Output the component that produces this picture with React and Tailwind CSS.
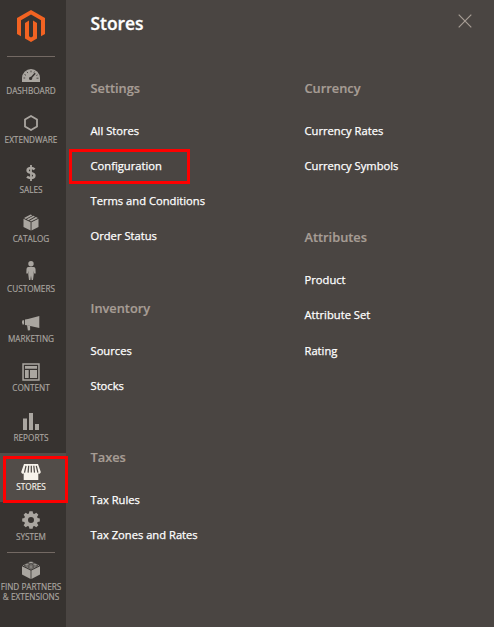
import React from "react";

const MagentoLogo = () => (
  <svg width="28" height="32" viewBox="0 0 28 32" fill="#f26322">
    <path d="M14 0L28 8V24L24 26.3V10.3L14 4.6L4 10.3V26.3L0 24V8Z" />
    <path d="M12 10.6V26.3L14 27.5L16 26.3V10.6L20 12.9V28.6L14 32L8 28.6V12.9Z" />
  </svg>
);

const Dashboard = () => (
  <svg width="18" height="13" viewBox="0 0 18 13" fill="currentColor">
    <path d="M0 13V9A9 9 0 0 1 18 9V13Z" />
    <g stroke="#373330" strokeWidth="0.8" fill="none">
      <path d="M1.5 9H3.2M2.5 5.5L4 6.3M5 2.8L5.9 4.1M9 1.6V3.3M12.5 2.6L11.9 3.6M14.5 9.2H16.5M14.3 6.5L15.6 5.9" />
      <path d="M8.3 9.7L13.2 4.2" strokeWidth="1.5" />
    </g>
    <circle cx="8.6" cy="9.4" r="1.6" fill="#373330" />
  </svg>
);

const Hexagon = () => (
  <svg width="14" height="16" viewBox="0 0 14 16" fill="none" stroke="currentColor" strokeWidth="1.8">
    <path d="M7 1L13 4.5V11.5L7 15L1 11.5V4.5Z" />
  </svg>
);

const Dollar = () => (
  <svg width="10" height="16" viewBox="0 0 10 16" fill="none" stroke="currentColor" strokeWidth="2.5">
    <path d="M8.6 4.4C7.5 3.4 6.4 3.1 5.1 3.1C3.2 3.1 1.6 3.8 1.6 5.4C1.6 8.7 8.4 7.1 8.4 10.5C8.4 12.2 6.9 13 4.8 13C3.2 13 1.9 12.5 1 11.8" />
    <path d="M5 0V16" strokeWidth="1.8" />
  </svg>
);

const Box = () => (
  <svg width="16" height="17" viewBox="0 0 16 17" fill="currentColor">
    <path d="M0.5 4.8L7.6 8.3V16.6L0.5 13ZM15.5 4.8L8.5 8.3V16.6L15.5 13Z" />
    <path d="M7.6 0.4L9.4 1.2L2.8 4.9L1 4ZM10.3 1.7L12 2.5L5.4 6.2L3.7 5.3ZM12.9 3L15 4L8.1 7.5L6.4 6.7Z" />
  </svg>
);

const Person = () => (
  <svg width="10" height="19" viewBox="0 0 10 19" fill="currentColor">
    <circle cx="5" cy="2.8" r="2.7" />
    <path d="M2.4 6H7.6Q9.4 6 9.5 8L9.7 12.5H8.1L7.7 9.5V13.5L7 19H5.6L5 14.5L4.4 19H3L2.3 13.5V9.5L1.9 12.5H0.3L0.5 8Q0.6 6 2.4 6Z" />
  </svg>
);

const Megaphone = () => (
  <svg width="18" height="15" viewBox="0 0 18 15" fill="currentColor">
    <path d="M17.3 0V12L6 9.4V3.1Z" />
    <path d="M3 3.4L6 3V9.4L3 9.1ZM0.4 4.2H2.1V8.4H0.4V7.2H0V5.2H0.4Z" />
    <path d="M5 9L8.1 10V14.2L5.9 14.6Z" />
  </svg>
);

const Layout = () => (
  <svg width="18" height="18" viewBox="0 0 18 18" fill="currentColor">
    <path fillRule="evenodd" d="M0.3 0.3H17.7V17.7H0.3ZM1.8 1.8V16.2H16.2V1.8Z" />
    <path d="M3 3H15V5.8H3ZM3 7H6.7V15H3ZM8 7H15V15H8Z" />
  </svg>
);

const Bars = () => (
  <svg width="16" height="17" viewBox="0 0 16 17" fill="currentColor">
    <path d="M0 5.5H4V17H0ZM6 0H10V17H6ZM12 11H16V17H12Z" />
  </svg>
);

const Store = () => (
  <svg width="20" height="16" viewBox="0 0 20 16" fill="currentColor">
    <path d="M3 0H17L19.8 8A1.8 1.8 0 0 1 17.3 9.6V16H2.7V9.6A1.8 1.8 0 0 1 0.2 8Z" />
    <path
      d="M5 1.8L3.5 8.6M7.7 1.8L7.1 8.6M10.3 1.8V8.6M12.8 1.8L13.5 8.6M15.3 1.8L16.9 8.6"
      stroke="#524d49"
      strokeWidth="1.25"
    />
  </svg>
);

const Gear = () => (
  <svg width="18" height="18" viewBox="0 0 18 18" fill="currentColor">
    <path
      fillRule="evenodd"
      d="M7.4 0.2H10.6L11.1 2.5L12.3 3L14.3 1.7L16.4 3.8L15.1 5.8L15.6 7L17.8 7.4V10.6L15.6 11L15.1 12.2L16.4 14.2L14.3 16.3L12.3 15L11.1 15.5L10.6 17.8H7.4L6.9 15.5L5.7 15L3.7 16.3L1.6 14.2L2.9 12.2L2.4 11L0.2 10.6V7.4L2.4 7L2.9 5.8L1.6 3.8L3.7 1.7L5.7 3L6.9 2.5ZM9 6A3 3 0 1 0 9 12A3 3 0 1 0 9 6Z"
    />
  </svg>
);

const Brick = () => (
  <svg width="18" height="18" viewBox="0 0 18 18" fill="currentColor">
    <path d="M0 5.2L8.6 9.6V18L0 13.5ZM18 5.2L9.4 9.6V18L18 13.5Z" />
    <path d="M9 0.3L17.2 4.5L9 8.7L0.8 4.5Z" />
    <g stroke="#373330" strokeWidth="0.7" fill="currentColor">
      <path d="M6.7 1.5V2.7A2.3 1.1 0 0 0 11.3 2.7V1.5" />
      <ellipse cx="9" cy="1.5" rx="2.3" ry="1.1" />
      <path d="M2.5 3.8V5A2.3 1.1 0 0 0 7.1 5V3.8M10.9 3.8V5A2.3 1.1 0 0 0 15.5 5V3.8" />
      <ellipse cx="4.8" cy="3.8" rx="2.3" ry="1.1" />
      <ellipse cx="13.2" cy="3.8" rx="2.3" ry="1.1" />
      <path d="M6.7 6V7.2A2.3 1.1 0 0 0 11.3 7.2V6" />
      <ellipse cx="9" cy="6" rx="2.3" ry="1.1" />
    </g>
  </svg>
);

const navItems = [
  { label: "DASHBOARD", Icon: Dashboard, lift: "pb-0" },
  { label: "EXTENDWARE", Icon: Hexagon, lift: "pb-[3px]" },
  { label: "SALES", Icon: Dollar, lift: "pb-[3px]" },
  { label: "CATALOG", Icon: Box, lift: "pb-1" },
  { label: "CUSTOMERS", Icon: Person, lift: "pb-[6px]" },
  { label: "MARKETING", Icon: Megaphone, lift: "pb-0" },
  { label: "CONTENT", Icon: Layout, lift: "pb-[2px]" },
  { label: "REPORTS", Icon: Bars, lift: "pb-[2px]" },
  { label: "STORES", Icon: Store, lift: "pb-0", active: true },
  { label: "SYSTEM", Icon: Gear, lift: "pb-[3px]" },
];

const columns = [
  [
    { title: "Settings", links: ["All Stores", "Configuration", "Terms and Conditions", "Order Status"] },
    { title: "Inventory", links: ["Sources", "Stocks"] },
    { title: "Taxes", links: ["Tax Rules", "Tax Zones and Rates"] },
  ],
  [
    { title: "Currency", links: ["Currency Rates", "Currency Symbols"] },
    { title: "Attributes", links: ["Product", "Attribute Set", "Rating"] },
  ],
];

function NavItem({ label, Icon, lift, active }) {
  return (
    <a
      className={
        "relative flex h-[49.6px] flex-col items-center pt-2 " +
        (active ? "bg-[#524d49] text-[#f7f3eb]" : "text-[#aaa6a0]")
      }
    >
      <span className={"flex h-[22.6px] items-center justify-center pr-1 " + lift}>
        <Icon />
      </span>
      <span className="h-2 w-[62px] self-start text-center text-[8.2px] leading-[8px] whitespace-nowrap [-webkit-text-stroke:0.15px]">
        {label}
      </span>
      {active && <span className="absolute top-[3px] left-[3px] z-10 h-[47px] w-[65px] border-3 border-[#fe0000]" />}
    </a>
  );
}

function Group({ title, links }) {
  return (
    <section>
      <h2 className="mb-[15.6px] text-[12.8px] leading-5 font-semibold text-[#a79d95] [-webkit-text-stroke:0.2px]">
        {title}
      </h2>
      <ul>
        {links.map((link) => (
          <li
            key={link}
            className="relative flex h-[35.15px] items-center text-[11.2px] text-white [-webkit-text-stroke:0.25px]"
          >
            {link}
            {link === "Configuration" && (
              <span className="absolute top-[0.5px] -left-[22px] h-[35px] w-[121px] border-3 border-[#fe0000]" />
            )}
          </li>
        ))}
      </ul>
    </section>
  );
}

export default function App() {
  return (
    <div className="flex h-[627px] w-[494px] overflow-hidden bg-[#4a4542] font-['Open_Sans','Noto_Sans',sans-serif]">
      <nav className="w-[66px] shrink-0 bg-[#373330]">
        <div className="flex h-14 justify-center pt-[10px] pr-1">
          <MagentoLogo />
        </div>
        <div className="mx-[7px] -mb-px h-px w-12 bg-[#736963]" />
        {navItems.map((item) => (
          <NavItem key={item.label} {...item} />
        ))}
        <div className="mx-[7px] h-px w-12 bg-[#736963]" />
        <a className="flex flex-col text-[#aaa6a0]">
          <span className="flex h-[29px] items-start justify-center pt-2 pr-1">
            <Brick />
          </span>
          <span className="w-[62px] text-center text-[8.2px] leading-[10px] whitespace-nowrap [-webkit-text-stroke:0.15px]">
            FIND PARTNERS
            <br />
            &amp; EXTENSIONS
          </span>
        </a>
      </nav>
      <main className="min-w-0 flex-1 pl-[24.5px]">
        <header className="flex h-[78px] items-start justify-between pr-[22px]">
          <h1 className="pt-[11px] text-[17.4px] leading-6 font-semibold text-white [-webkit-text-stroke:0.3px]">
            Stores
          </h1>
          <svg className="mt-[14px]" width="14" height="14" viewBox="0 0 14 14" stroke="#a79d95" strokeWidth="1.2">
            <path d="M0.7 0.7L13.3 13.3M13.3 0.7L0.7 13.3" />
          </svg>
        </header>
        <div className="flex">
          {columns.map((groups, i) => (
            <div key={i} className="flex w-[214px] shrink-0 flex-col gap-[43.6px]">
              {groups.map((g) => (
                <Group key={g.title} {...g} />
              ))}
            </div>
          ))}
        </div>
      </main>
    </div>
  );
}
